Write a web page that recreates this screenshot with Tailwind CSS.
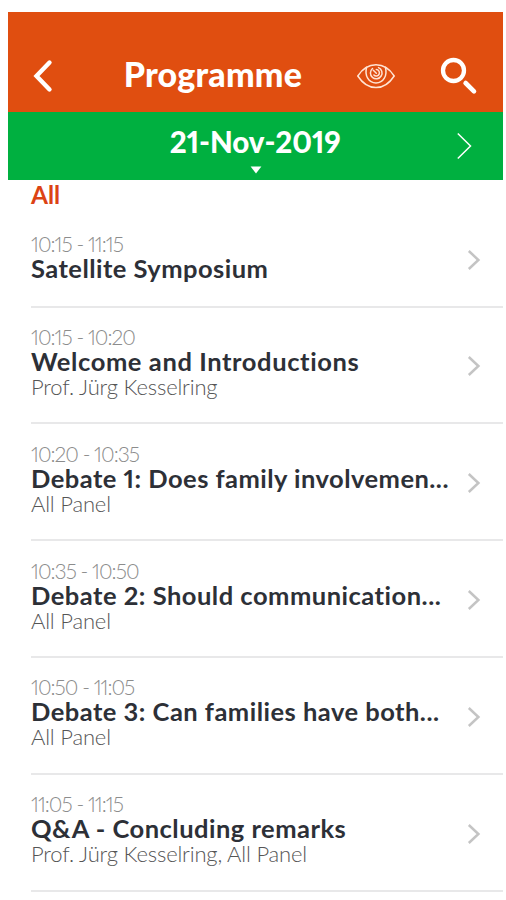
<!DOCTYPE html>
<html lang="en">
<head>
<meta charset="utf-8">
<title>Programme</title>
<script src="https://cdn.jsdelivr.net/npm/@tailwindcss/browser@4"></script>
</head>
<body class="bg-white font-['Lato',sans-serif] proportional-nums overflow-hidden">
<div class="w-[506px] h-[900px] pl-[7.7px] pr-[3px] pt-[12px] overflow-hidden">
  <header class="h-[99.5px] bg-[#e04e10] flex items-start text-white">
    <svg class="ml-[24px] mt-[46px] w-[22px] h-[36px] shrink-0" viewBox="0 0 22 36" fill="none" stroke="#fff" stroke-width="4.4" stroke-linecap="round"><path d="M17.5 4.5 4.5 18 17.5 31.5"/></svg>
    <h1 class="ml-[70px] mt-[41.5px] w-[182px] text-[34px] leading-[40px] font-black tracking-[0.2px] whitespace-nowrap">Programme</h1>
    <svg class="ml-[50.5px] mt-[50px] w-[40px] h-[28px] shrink-0" viewBox="0 0 40 28" fill="none" stroke="#ffe4d4" stroke-width="1.5" stroke-linecap="round"><path d="M1.8 14C7 6 13 2.8 20 2.8S33 6 38.2 14C33 22 27 25.6 20 25.6S7 22 1.8 14Z"/><path d="M10.6 5.2C8.4 13.5 12.5 21 20 21S31.6 13.5 29.4 5.2"/><path d="M16.5 6.5A5.8 5.8 0 1 0 22.5 5.6"/><path d="M17.3 8.3 20.3 11.3M20.3 7.6a3.2 3.2 0 1 1-2.4 5.4"/></svg>
    <svg class="ml-[43px] mt-[43px] w-[40px] h-[40px] shrink-0" viewBox="0 0 40 40" fill="none" stroke="#fff" stroke-linecap="round"><circle cx="14.5" cy="15.5" r="10.5" stroke-width="4.3"/><path d="m26.6 28 8.4 8.3" stroke-width="4.6"/></svg>
  </header>
  <div class="relative h-[68px] bg-[#00b040] text-white">
    <div class="pt-[13.5px] pl-[162px] text-[29.5px] leading-[34px] font-black tracking-[-0.05px] whitespace-nowrap">21-Nov-2019</div>
    <svg class="absolute left-[242px] top-[54px] w-[12px] h-[8px]" viewBox="0 0 12 8"><path d="M.6.4h10.8L6 7.6Z" fill="#fff"/></svg>
    <svg class="absolute left-[447px] top-[19px] w-[18px] h-[30px]" viewBox="0 0 18 30" fill="none" stroke="#fff" stroke-width="1.5"><path d="M2.8 2.5 15.5 15 2.8 27.5"/></svg>
  </div>
  <main class="pl-[23.3px]">
    <h2 class="h-[33px] text-[24.5px] leading-[30px] font-bold text-[#dc4314]">All</h2>
    <ul id="sessions"></ul>
  </main>
</div>
<template id="row">
  <li class="flex items-center justify-between border-b-2 border-[#e8e8e9] pr-[22px]">
    <div class="whitespace-nowrap">
      <div class="time text-[21px] leading-[25px] h-[25px] font-light tracking-[-1px] text-[#8c8c8c]"></div>
      <div class="title text-[25.5px] leading-[25px] h-[25px] font-bold text-[#2d3037]"></div>
      <div class="who text-[22px] leading-[25px] h-[25px] font-light tracking-[-0.18px] text-[#555]"></div>
    </div>
    <svg class="mt-[2px] w-[14px] h-[22px] shrink-0" viewBox="0 0 14 22" fill="none" stroke="#c4c4c4" stroke-width="2.5"><path d="M1.8 2 11.4 11 1.8 20"/></svg>
  </li>
</template>
<script>
const sessions = [
  ["10:15 - 11:15", "Satellite Symposium", "", "tracking-[0.46px]"],
  ["10:15 - 10:20", "Welcome and Introductions", "Prof. Jürg Kesselring", "tracking-[0.6px]"],
  ["10:20 - 10:35", "Debate 1: Does family involvemen...", "All Panel", "tracking-[0.47px]"],
  ["10:35 - 10:50", "Debate 2: Should communication...", "All Panel", "tracking-[0.5px]"],
  ["10:50 - 11:05", "Debate 3: Can families have both...", "All Panel", "tracking-[0.48px]"],
  ["11:05 - 11:15", "Q&A - Concluding remarks", "Prof. Jürg Kesselring, All Panel", "tracking-[0.48px]"],
];
const list = document.getElementById("sessions");
for (const [time, title, who, tracking] of sessions) {
  const li = document.getElementById("row").content.cloneNode(true).firstElementChild;
  li.querySelector(".time").textContent = time;
  li.querySelector(".title").textContent = title;
  li.querySelector(".title").classList.add(tracking);
  if (who) li.querySelector(".who").textContent = who;
  else li.querySelector(".who").remove();
  li.firstElementChild.classList.add(who ? "pb-[7.4px]" : "pb-[6px]");
  li.classList.add(who ? "h-[116.9px]" : "h-[95px]");
  list.append(li);
}
</script>
</body>
</html>
